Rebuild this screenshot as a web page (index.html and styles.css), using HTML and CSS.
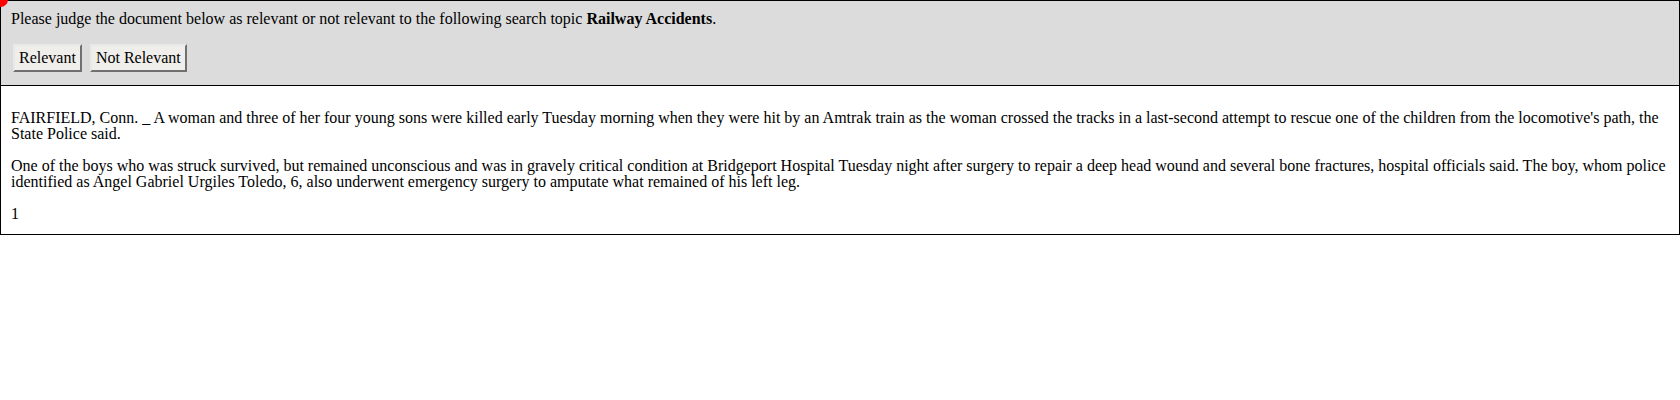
FILE: index.html
```html
<!DOCTYPE html>
<html>
<head>
<meta charset="utf-8">
<link rel="stylesheet" href="styles.css">
</head>
<body>
<div class="marker"></div>
<div class="judge">
  <div class="prompt">Please judge the document below as relevant or not relevant to the following search topic <b>Railway Accidents</b>.</div>
  <div class="actions">
    <button class="btn">Relevant</button>
    <button class="btn">Not Relevant</button>
  </div>
</div>
<div class="doc">
  <p>FAIRFIELD, Conn. _ A woman and three of her four young sons were killed early Tuesday morning when they were hit by an Amtrak train as the woman crossed the tracks in a last-second attempt to rescue one of the children from the locomotive's path, the State Police said.</p>
  <p>One of the boys who was struck survived, but remained unconscious and was in gravely critical condition at Bridgeport Hospital Tuesday night after surgery to repair a deep head wound and several bone fractures, hospital officials said. The boy, whom police identified as Angel Gabriel Urgiles Toledo, 6, also underwent emergency surgery to amputate what remained of his left leg.</p>
  <p class="last">1</p>
</div>
</body>
</html>
```

FILE: styles.css
```css
html, body {
  margin: 0;
  padding: 0;
  background: #ffffff;
}
body {
  font-family: "Liberation Serif", "Times New Roman", serif;
  font-size: 16px;
  line-height: 16px;
  color: #000;
  position: relative;
}
.marker {
  position: absolute;
  left: -7px;
  top: -8px;
  width: 15px;
  height: 15px;
  border-radius: 50%;
  background: #f00;
}
.judge {
  background: #dcdcdc;
  border: 1px solid #000;
  padding: 10px 10px 13px 10px;
}
.prompt {
  margin: 0;
}
.actions {
  display: flex;
  gap: 8px;
  margin-top: 17px;
  padding-left: 2px;
}
.btn {
  font-family: "Liberation Serif", "Times New Roman", serif;
  font-size: 16px;
  line-height: 16px;
  height: 28px;
  padding: 0 4px;
  background: #f0eeea;
  color: #000;
  border: 2px solid;
  border-color: #e8e8e8 #707070 #707070 #e8e8e8;
  margin: 0;
}
.doc {
  border: 1px solid #000;
  border-top: none;
  padding: 8px 10px 12px 10px;
}
.doc p {
  margin: 16px 0;
}
.doc p.last {
  margin-bottom: 0;
}
```
